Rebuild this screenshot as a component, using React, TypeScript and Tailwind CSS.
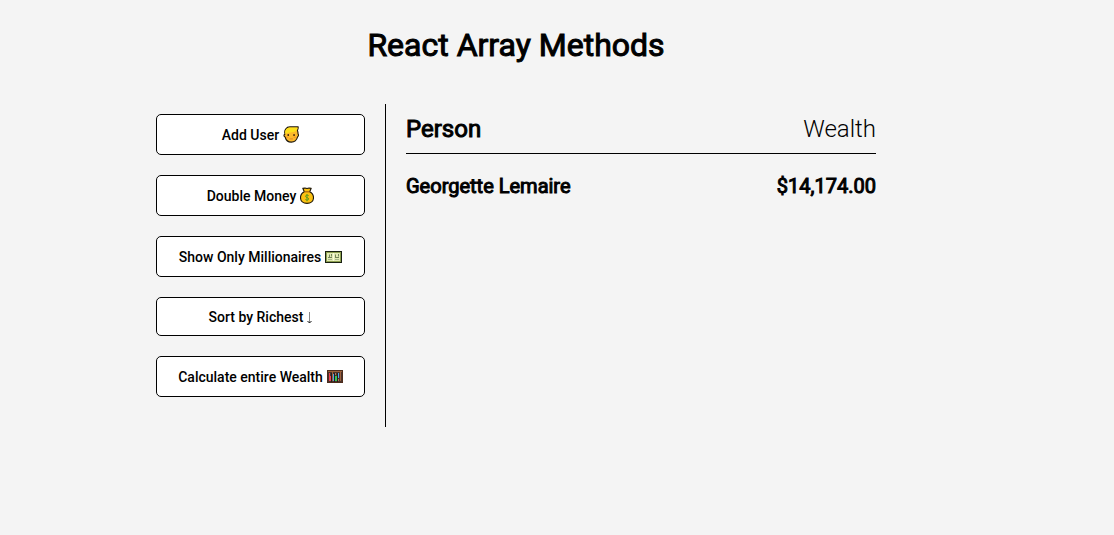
import type { ReactNode } from "react";

function PersonIcon() {
  return (
    <svg aria-hidden="true" viewBox="0 0 16 17" className="h-[17px] w-4 shrink-0">
      <path d="M2 8C.9 4 3.300 1 7 .9h8.200c0 1.600-.2 2.700-.8 3.500.5 1.200.7 2.500.7 3.700.6.700.5 2.200-.5 2.700-.9 3.200-3.300 5.300-6.300 5.300s-5.400-2.100-6.200-5.100C.5 10.500.700 8.500 2 8z" fill="#fcb92b" stroke="#1d1608" strokeWidth="1.100" strokeLinejoin="round" />
      <path d="M2.300 8C1.500 3.900 3.900 1.500 7 1.500h7.600c-.1 1.800-.7 3-2 3.800C10 6.700 5.500 6 2.600 8z" fill="#fde01c" />
      <rect x="4.500" y="8.200" width="1.500" height="1.700" fill="#3a1e0c" />
      <rect x="10.300" y="8.200" width="1.500" height="1.700" fill="#3a1e0c" />
      <path d="M3.300 11.300h2M10.800 11.300h2" stroke="#f58a2e" strokeWidth="1.100" />
      <path d="M6.500 12.900h3.400" stroke="#d9792a" strokeWidth=".8" />
    </svg>
  );
}

function MoneyBagIcon() {
  return (
    <svg aria-hidden="true" viewBox="0 0 14 17" className="h-[17px] w-3.5 shrink-0">
      <path d="M4.300 4.700 2.800 1.300 4.900 1l2.100.5L9.100 1l2.100.3-1.500 3.400c2.400 1.200 3.800 3.500 3.800 6 0 3.600-2.800 5.700-6.500 5.700S.5 14.300.5 10.700c0-2.500 1.400-4.800 3.800-6z" fill="#fbc112" stroke="#1d1608" strokeWidth="1.100" strokeLinejoin="round" />
      <path d="M4.400 4.800h5.200" stroke="#a15c10" strokeWidth="1.100" />
      <path d="M8.700 8.700C8 8 5.500 7.900 5.500 9.300c0 1.500 3.200 1 3.200 2.600 0 1.400-2.500 1.400-3.300.6M7 7v7.300" fill="none" stroke="#5d9a1c" strokeWidth="1" />
    </svg>
  );
}

function BanknoteIcon() {
  return (
    <svg aria-hidden="true" viewBox="0 0 17 12" className="h-3 w-[17px] shrink-0">
      <rect x=".5" y=".5" width="16" height="11" fill="#e3ebb5" stroke="#182012" />
      <rect x="1.500" y="1.500" width="14" height="9" fill="none" stroke="#8da050" />
      <path d="M4.500 3.500v2.500M6.500 3v2.500M3 6.500h4M10.500 3.500v2.500M13.500 3v2.500M10 6.500h4" stroke="#74865a" />
      <path d="M8.500 2v8" stroke="#f8fbdc" />
      <path d="M3 8.500h4M10 8.500h4" stroke="#a9b98a" />
    </svg>
  );
}

function DownArrowIcon() {
  return (
    <svg aria-hidden="true" viewBox="0 0 5 14" className="h-3.5 w-[5px] shrink-0">
      <path d="M2.500 2v11" stroke="#888" />
      <path d="M.5 11 2.500 13 4.500 11" fill="none" stroke="#111" />
    </svg>
  );
}

function AbacusIcon() {
  return (
    <svg aria-hidden="true" viewBox="0 0 16 13" className="h-[13px] w-4 shrink-0">
      <rect x=".5" y=".5" width="15" height="12" fill="#4a342b" stroke="#4d2c1c" />
      <path d="M1 1.500h14" stroke="#9a6038" />
      <path d="M2 3h1v8H2zM3 6h1v5H3z" fill="#ee3f52" />
      <path d="M5 2h1v9H5zM13 2h1v9h-1z" fill="#9d5f3c" />
      <path d="M6 4h1v7H6zM11 3h1v5h-1z" fill="#4fa6e8" />
      <path d="M8 6h2v5H8z" fill="#37c552" />
      <path d="M4 3h1v9H4zM7 3h1v9H7zM10 3h1v9h-1z" fill="#241d1d" />
      <path d="M8 3h1v2H8zM11 9h1v2h-1z" fill="#b77a50" />
    </svg>
  );
}

const actions: { label: string; icon: ReactNode }[] = [
  { label: "Add User", icon: <PersonIcon /> },
  { label: "Double Money", icon: <MoneyBagIcon /> },
  { label: "Show Only Millionaires", icon: <BanknoteIcon /> },
  { label: "Sort by Richest", icon: <DownArrowIcon /> },
  { label: "Calculate entire Wealth", icon: <AbacusIcon /> },
];

const people = [{ name: "Georgette Lemaire", wealth: "$14,174.00" }];

export default function App() {
  return (
    <div className="min-h-screen bg-[#f4f4f4] pt-[25px] pr-[82px] font-['Roboto',sans-serif] text-black">
      <h1 className="text-center text-[32px] leading-10 font-normal [-webkit-text-stroke:1px_black]">React Array Methods</h1>
      <main className="mx-auto mt-[39px] flex max-w-[760px]">
        <aside className="flex w-[250px] shrink-0 flex-col gap-5 border-r border-black px-5 pt-2.5 pb-[30px]">
          {actions.map(({ label, icon }) => (
            <button
              key={label}
              type="button"
              className="flex h-[41px] items-center justify-center gap-1 rounded-[5px] border border-black bg-white text-sm font-medium nth-4:h-[39px]"
            >
              {label}
              {icon}
            </button>
          ))}
        </aside>
        <section className="grow px-5 pt-2.5">
          <table className="w-full">
            <thead>
              <tr className="border-b border-black text-2xl">
                <th scope="col" className="pb-2 text-left leading-[31px] font-normal [-webkit-text-stroke:1px_black]">Person</th>
                <th scope="col" className="pb-2 text-right leading-[31px] font-light">Wealth</th>
              </tr>
            </thead>
            <tbody>
              {people.map(({ name, wealth }) => (
                <tr key={name} className="text-xl font-normal [-webkit-text-stroke:1px_black]">
                  <td className="pt-[18px]">{name}</td>
                  <td className="pt-[18px] text-right">{wealth}</td>
                </tr>
              ))}
            </tbody>
          </table>
        </section>
      </main>
    </div>
  );
}
